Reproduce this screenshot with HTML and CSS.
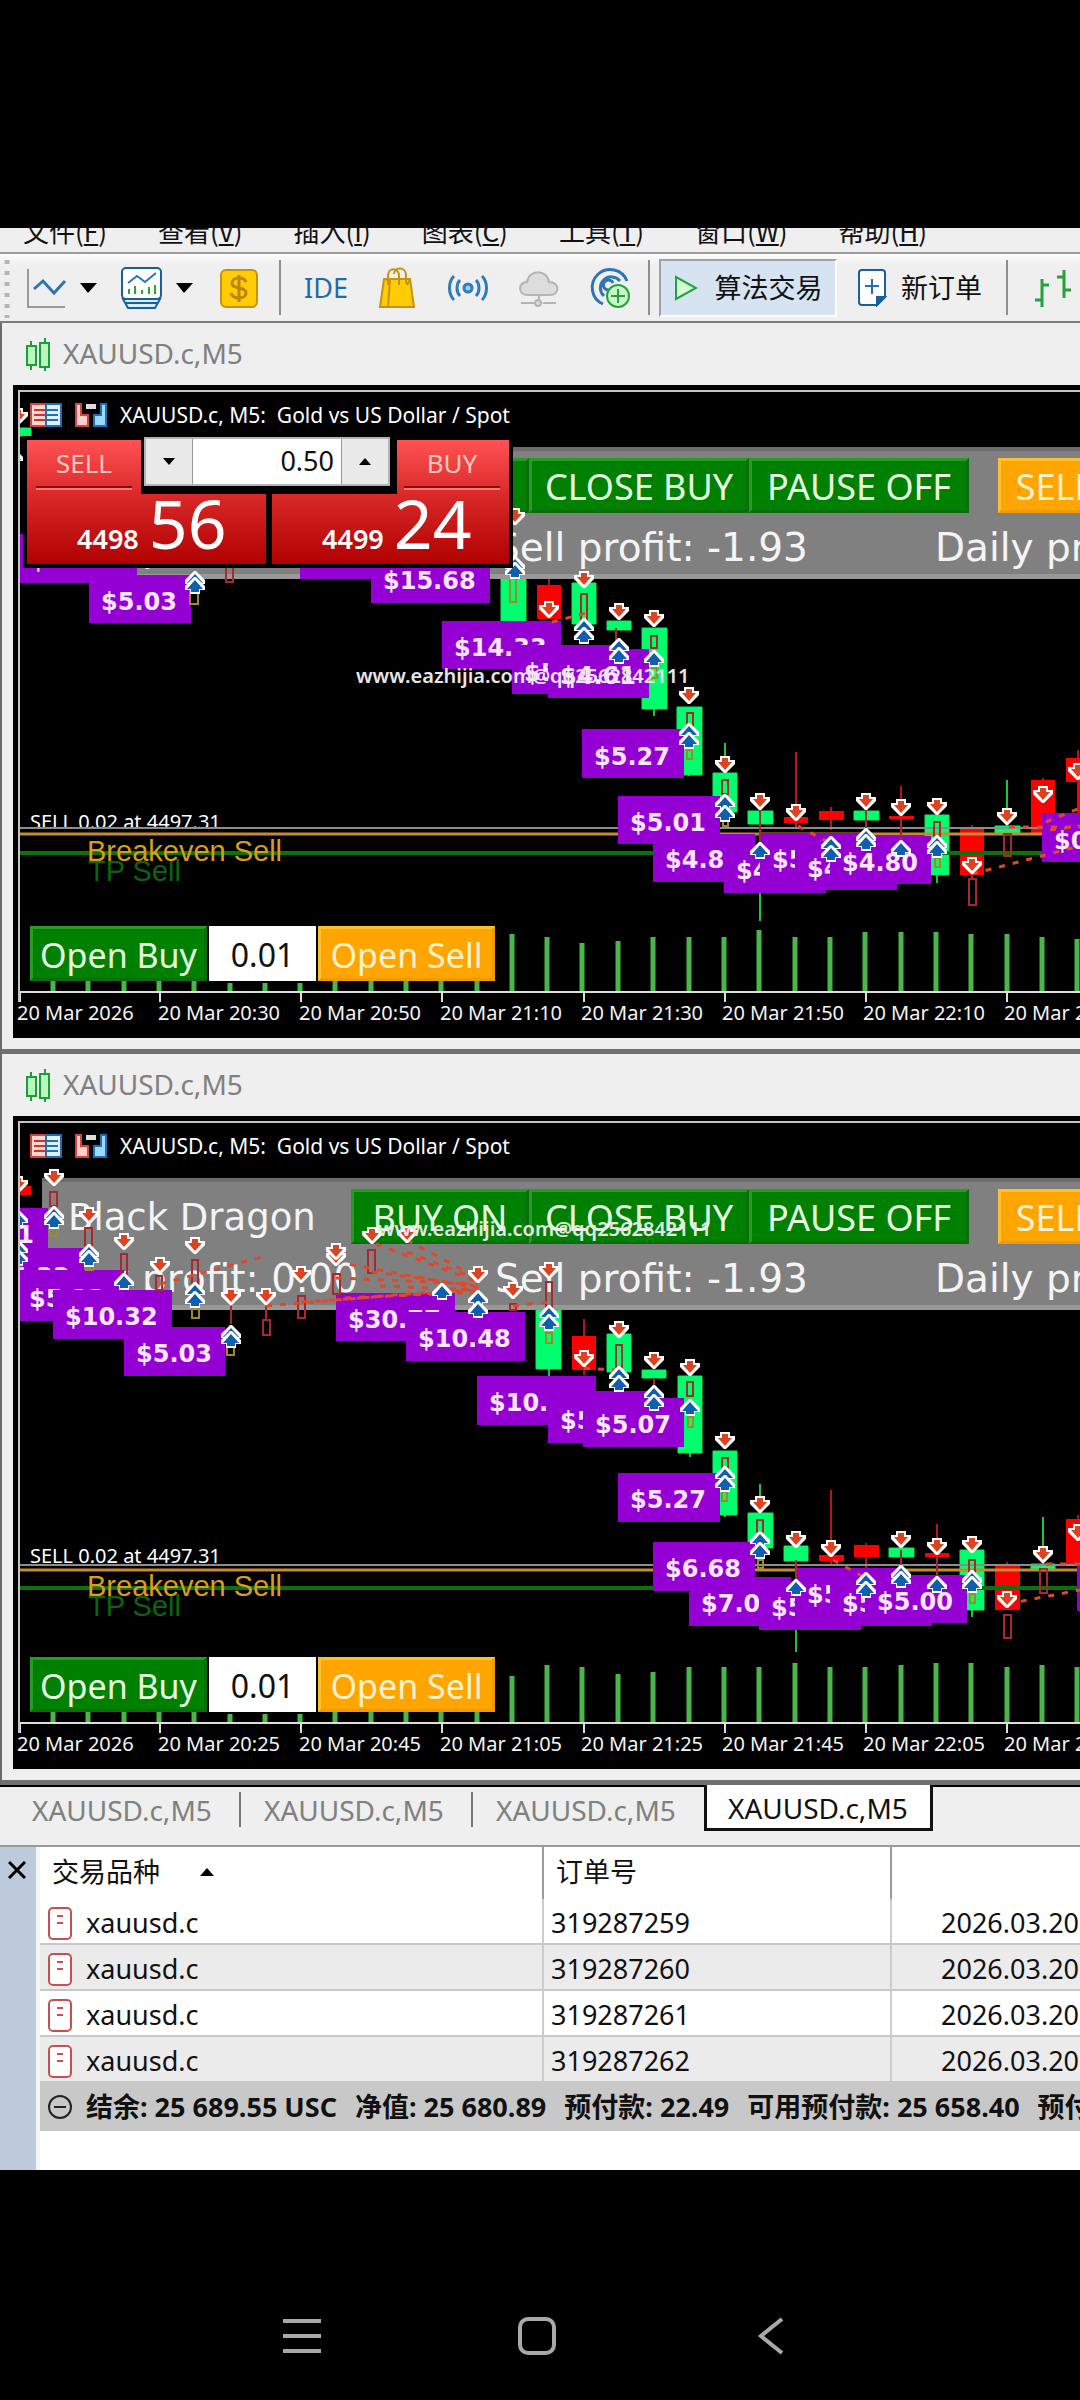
FILE: index.html
```html
<!DOCTYPE html>
<html lang="zh-CN">
<head>
<meta charset="utf-8">
<meta name="viewport" content="width=device-width, initial-scale=1">
<title>XAUUSD.c,M5</title>
<link rel="stylesheet" href="styles.css">
</head>
<body>
<svg class="defs" aria-hidden="true">
  <defs>
    <g id="dn"><path d="M-5 0H5V4H10V8L1 17H-1L-10 8V4H-5Z" fill="#fff"/><path d="M-3 2H3V6H7L0 14L-7 6H-3Z" fill="#dc4320"/></g>
    <g id="up"><path d="M-5 17H5V13H10V9L1 0H-1L-10 9V13H-5Z" fill="#fff"/><path d="M-4 15H4V12H8L0 3L-8 12H-4Z" fill="#0f5fae"/></g>
    <g id="up2"><use href="#up"/><use href="#up" y="6"/></g>
    <g id="up3"><use href="#up"/><use href="#up" y="9"/></g>
    <g id="candles"><path d="M6 4v5M6 28v5M20 1v5M20 30v4" stroke="#18a038" stroke-width="2"/><path d="M2 9h9v19H2zM15 6h9v24h-9z" fill="#b9f7bd" stroke="#18a038" stroke-width="2"/></g>
    <g id="depth"><path d="M1 1h15v22H1z" fill="#ffd8d0" stroke="#d8433a" stroke-width="2"/><path d="M16 1h15v22H16z" fill="#dff1ff" stroke="#1f6fb5" stroke-width="2"/><path d="M4 7h11M4 12h11M4 17h11" stroke="#c8362f" stroke-width="2"/><path d="M17 7h11M17 12h11M17 17h11" stroke="#1f6fb5" stroke-width="2"/></g>
    <g id="quick"><path d="M1 1h5v11h7v11H1z" fill="#ffd0cc" stroke="#d8433a" stroke-width="2"/><path d="M31 1h-5v11h-7v11h12z" fill="#9fd8ff" stroke="#1f6fb5" stroke-width="2"/><path d="M11 1h10v5H11z" fill="#ddd"/></g>
    <g id="order"><rect x="1" y="1" width="22" height="31" rx="4" fill="#fff" stroke="#c8504c" stroke-width="2"/><path d="M9 9h6M9 16h6" stroke="#c8504c" stroke-width="2"/></g>
  </defs>
</svg>

<main class="terminal">
  <nav class="menu">
    <a href="#file">文件(<u>F</u>)</a><a href="#view">查看(<u>V</u>)</a><a href="#insert">插入(<u>I</u>)</a><a href="#charts">图表(<u>C</u>)</a><a href="#tools">工具(<u>T</u>)</a><a href="#window">窗口(<u>W</u>)</a><a href="#help">帮助(<u>H</u>)</a>
  </nav>

  <div class="toolbar">
    <svg class="grip" width="6" height="60"><path d="M3 2v58" stroke="#b5b5b5" stroke-width="5" stroke-dasharray="4 7"/></svg>
    <div class="group group-main">
      <button class="tool split" aria-label="Chart type">
        <svg width="42" height="42"><path d="M3 2v38h37" fill="none" stroke="#9a9a9a" stroke-width="2"/><path d="M9 22l9-8 11 12 11-12" fill="none" stroke="#2f74b5" stroke-width="3"/></svg>
        <svg width="17" height="10"><path d="M0 0h17L8 10z"/></svg>
      </button>
      <button class="tool split" aria-label="Indicators">
        <svg width="42" height="44"><rect x="1" y="2" width="39" height="31" rx="4" fill="#fff" stroke="#1b5f9a" stroke-width="2"/><path d="M2 33l5 9h27l5-9z" fill="#d8efff" stroke="#1b5f9a" stroke-width="2"/><path d="M5 37h31" stroke="#1b5f9a" stroke-width="2"/><path d="M7 17l9-7 8 6 11-9" fill="none" stroke="#2f74b5" stroke-width="2"/><path d="M8 28v-5M14 28v-8M21 28v-4M28 28v-7M34 28v-9" stroke="#2ea52e" stroke-width="2"/></svg>
        <svg width="17" height="10"><path d="M0 0h17L8 10z"/></svg>
      </button>
      <button class="tool" aria-label="Symbols">
        <svg width="42" height="42"><rect x="4" y="3" width="36" height="37" rx="5" fill="#ffcc05" stroke="#c8930c" stroke-width="2"/><path d="M29 15c-1-3-4-4-7-4-4 0-7 2-7 5 0 7 14 3 14 10 0 3-3 5-7 5s-7-2-8-5M22 8v27" fill="none" stroke="#bd8508" stroke-width="3"/></svg>
      </button>
    </div>
    <span class="rule"></span>
    <div class="group group-market">
      <button class="tool ide">IDE</button>
      <button class="tool" aria-label="Market"><svg width="42" height="42"><path d="M8 12h26l4 28H4z" fill="#ffcc05" stroke="#c8930c" stroke-width="2"/><path d="M8 12l6 1-2 27M34 12l-3 6" fill="none" stroke="#c8930c" stroke-width="2"/><path d="M12 18V9c0-9 11-9 11 0v9M18 7c1-8 12-7 12 1v9" fill="none" stroke="#c8930c" stroke-width="2"/></svg></button>
      <button class="tool" aria-label="Signals"><svg width="42" height="42" fill="none" stroke="#2f7cba" stroke-width="3"><circle cx="21" cy="21" r="4" fill="#8fd0ff"/><path d="M13 13c-4 4-4 12 0 16M29 13c4 4 4 12 0 16M7 9c-6 6-6 18 0 24M35 9c6 6 6 18 0 24"/></svg></button>
      <button class="tool" aria-label="VPS"><svg width="42" height="42" fill="#ddd" stroke="#b4b4b4" stroke-width="2"><path d="M10 28c-11 0-10-13-1-13 2-13 20-13 22 0 11 0 11 13 1 13z"/><path d="M21 28v6M3 36h13M25 36h13"/><circle cx="20" cy="36" r="3"/></svg></button>
      <button class="tool" aria-label="Radar"><svg width="42" height="44" fill="none" stroke="#2f74b5" stroke-width="3"><path d="M14 38a18 18 0 1 1 24-23M15 30a11 11 0 1 1 16-15M20 24a5 5 0 1 1 4-7"/><circle cx="29" cy="30" r="11" fill="#c9f7c9" stroke="#24a33c" stroke-width="2"/><path d="M29 23v14M22 30h14" stroke="#24a33c" stroke-width="2"/></svg></button>
    </div>
    <span class="rule"></span>
    <button class="tool labelled pressed"><svg width="24" height="26"><path d="M2 2v22l20-11z" fill="#d4ffd4" stroke="#24a33c" stroke-width="2"/></svg>算法交易</button>
    <button class="tool labelled"><svg width="30" height="40"><path d="M5 2h20q3 0 3 3v24l-8 8H5q-3 0-3-3V5q0-3 3-3z" fill="#fff" stroke="#1b5f9a" stroke-width="2"/><path d="M28 29l-8 8v-8z" fill="#1b5f9a" stroke="#1b5f9a" stroke-width="2"/><path d="M15 11v15M8 18h14" stroke="#1b6fb5" stroke-width="2"/></svg>新订单</button>
    <span class="rule rule-wide"></span>
    <button class="tool" aria-label="Bar chart"><svg width="42" height="42" fill="none" stroke="#24a33c" stroke-width="3"><path d="M10 12v28M3 33h7M10 18h7M32 3v28M25 10h7M32 23h7"/></svg></button>
  </div>

  <section class="window">
    <h2 class="window-title"><svg width="26" height="36"><use href="#candles"/></svg>XAUUSD.c,M5</h2>
    <div class="canvas">
      <div class="plot">
        <svg class="layer"><g transform="translate(-20 -392)">
          <path class="vol" d="M53 980v12M88 980v12M124 980v12M159 980v12M194 980v12M230 983v9M265 983v9M300 983v9M335 980v12M371 980v12M406 980v12M441 980v12M477 980v12M512 934v58M547 937v55M582 943v49M618 941v51M653 937v55M689 937v55M724 937v55M759 930v62M795 937v55M830 937v55M865 932v60M901 932v60M936 932v60M971 934v58M1007 934v58M1042 937v55M1077 939v53"/>
          <path class="wick-up" d="M513 579v45M654 628v88M689 707v69M725 743v70M760 811v110M866 811v20M937 815v68M1007 780v54"/>
          <path class="wick-dn" d="M549 578v42M796 752v71M831 807v23M901 786v60M972 825v50M1043 778v55M1078 750v70"/>
          <path class="body-up" d="M20 428h11v8H20zM501 579h25v42h-25zM572 583h24v41h-24zM607 621h24v9h-24zM642 628h25v81h-25zM677 707h25v68h-25zM713 773h24v39h-24zM748 811h25v13h-25zM854 811h25v9h-25zM925 815h24v60h-24zM995 826h25v8h-25z"/>
          <path class="body-dn" d="M537 585h24v34h-24zM784 817h24v6h-24zM819 811h25v9h-25zM889 816h25v3h-25zM960 828h24v47h-24zM1031 780h24v53h-24zM1066 758h24v24h-24zM1077 782h5v31h-5z"/>
          <text class="order-line" x="30" y="829">SELL 0.02 at 4497.31</text>
          <path class="line-order" d="M20 828H4000"/><path class="line-even" d="M20 834H4000"/><path class="line-tp" d="M20 853H4000"/>
          <text class="note tp" x="88" y="881">TP Sell</text><text class="note even" x="87" y="861">Breakeven Sell</text>
          <path class="axis" d="M20 992H4000M20 992v10M160 992v10M301 992v10M442 992v10M584 992v10M725 992v10M866 992v10M1007 992v10"/>
        </g></svg>
        <div class="panel">
          <div class="panel-row"><strong class="robot">Black Dragon</strong><button class="ea">BUY ON</button><button class="ea wide">CLOSE BUY</button><button class="ea wide">PAUSE OFF</button><button class="ea sell">SELL ON</button></div>
          <div class="panel-stats"><span>Buy profit: 0.00</span><span>Sell profit: -1.93</span><span>Daily profit: 0.00</span></div>
        </div>
        <svg class="layer"><g transform="translate(-20 -392)">
          <g class="tag">
            <rect x="18" y="534" width="119" height="49"/><text x="30" y="568">$10.32</text>
            <rect x="89" y="575" width="102" height="48"/><text x="101" y="610">$5.03</text>
            <rect x="300" y="530" width="119" height="49"/>
            <rect x="371" y="554" width="119" height="49"/><text x="383" y="589">$15.68</text>
            <rect x="442" y="621" width="119" height="48"/><text x="454" y="656">$14.33</text>
            <rect x="512" y="645" width="102" height="49"/><text x="524" y="681">$5.12</text>
            <rect x="548" y="649" width="101" height="49"/><text x="560" y="684">$4.61</text>
            <rect x="582" y="729" width="102" height="49"/><text x="594" y="765">$5.27</text>
            <rect x="618" y="796" width="102" height="48"/><text x="630" y="831">$5.01</text>
            <rect x="653" y="834" width="102" height="48"/><text x="665" y="868">$4.85</text>
            <rect x="724" y="845" width="102" height="48"/><text x="736" y="879">$4.90</text>
            <rect x="760" y="833" width="102" height="48"/><text x="772" y="868">$5.10</text>
            <rect x="795" y="842" width="102" height="48"/><text x="807" y="877">$4.70</text>
            <rect x="830" y="836" width="101" height="48"/><text x="842" y="871">$4.80</text>
            <rect x="1042" y="813" width="102" height="49"/><text x="1054" y="849">$0.40</text>
          </g>
          <path class="trade" d="M226 560h7v22h-7zM581 594h6v26h-6zM616 628v14M651 636h6v12h-6zM687 713h6v14h-6zM722 780h6v14h-6zM760 808v34M796 823v4M866 810v20M901 815v27M934 822h6v14h-6zM972 874v4M969 879h7v26h-7zM1004 834h7v22h-7z"/>
          <path class="yield" d="M190 592h8v12h-8zM510 578h6v24h-6zM652 668h5v10h-5zM687 750h5v9h-5zM723 820h5v6h-5zM935 858h5v9h-5z"/>
          <path class="deal" d="M552 622L590 612M798 826L828 842M972 874L1080 846M1009 827H1080M1046 822l34-14M1050 830l30-4"/>
          <use href="#dn" x="18" y="408"/><use href="#up" x="13" y="448"/><use href="#dn" x="515" y="508"/><use href="#up2" x="515" y="556"/><use href="#up2" x="195" y="571"/>
          <use href="#dn" x="549" y="601"/><use href="#dn" x="584" y="571"/><use href="#dn" x="619" y="603"/><use href="#dn" x="654" y="610"/><use href="#dn" x="689" y="687"/><use href="#dn" x="725" y="756"/><use href="#dn" x="760" y="793"/><use href="#dn" x="796" y="804"/><use href="#dn" x="866" y="793"/><use href="#dn" x="901" y="799"/><use href="#dn" x="937" y="798"/><use href="#dn" x="972" y="857"/><use href="#dn" x="1007" y="808"/><use href="#dn" x="1043" y="786"/><use href="#dn" x="1078" y="763"/>
          <use href="#up3" x="584" y="618"/><use href="#up3" x="619" y="638"/><use href="#up" x="654" y="650"/><use href="#up3" x="689" y="723"/><use href="#up" x="725" y="794"/><use href="#up" x="725" y="805"/><use href="#up" x="760" y="842"/><use href="#up3" x="831" y="836"/><use href="#up2" x="866" y="828"/><use href="#up" x="901" y="840"/><use href="#up2" x="937" y="835"/>
        </g></svg>
        <div class="caption"><svg width="32" height="24"><use href="#depth"/></svg><svg width="32" height="24"><use href="#quick"/></svg><span>XAUUSD.c, M5:&nbsp; Gold vs US Dollar / Spot</span></div>
        <form class="oneclick">
          <button type="button" class="quote"><span class="side">SELL</span><span class="price"><small>4498</small><b>56</b></span></button>
          <button type="button" class="quote quote-buy"><span class="side">BUY</span><span class="price"><small>4499</small><b>24</b></span></button>
          <div class="volume">
            <button type="button" aria-label="Decrease"><svg width="12" height="7"><path d="M0 0h12L6 7z"/></svg></button>
            <input type="text" value="0.50" aria-label="Volume">
            <button type="button" aria-label="Increase"><svg width="12" height="7"><path d="M0 7h12L6 0z"/></svg></button>
          </div>
        </form>
        <form class="open"><button type="button" class="ea">Open Buy</button><input type="text" value="0.01" aria-label="Lots"><button type="button" class="ea sell">Open Sell</button></form>
        <p class="watermark">www.eazhijia.com@qq2562842111</p>
      </div>
      <ol class="times"><li>20 Mar 2026</li><li>20 Mar 20:30</li><li>20 Mar 20:50</li><li>20 Mar 21:10</li><li>20 Mar 21:30</li><li>20 Mar 21:50</li><li>20 Mar 22:10</li><li>20 Mar 22:30</li></ol>
    </div>
  </section>

  <section class="window">
    <h2 class="window-title"><svg width="26" height="36"><use href="#candles"/></svg>XAUUSD.c,M5</h2>
    <div class="canvas">
      <div class="plot">
        <svg class="layer"><g transform="translate(-20 -1123)">
          <path class="vol" d="M53 1711v12M88 1711v12M124 1711v12M159 1711v12M194 1711v12M230 1714v9M265 1714v9M300 1714v9M335 1711v12M371 1711v12M406 1711v12M441 1711v12M477 1711v12M512 1676v47M547 1665v58M582 1667v56M618 1674v49M653 1672v51M689 1667v56M724 1667v56M759 1667v56M795 1663v60M830 1667v56M865 1667v56M901 1665v58M936 1663v60M971 1663v60M1007 1667v56M1042 1665v58M1077 1667v56"/>
          <path class="wick-up" d="M549 1310v66M690 1376v81M725 1451v66M760 1484v64M796 1546v106M901 1548v20M972 1550v67M1043 1517v52"/>
          <path class="wick-dn" d="M584 1319v56M831 1490v75M866 1543v25M937 1524v56M1007 1562v48M1078 1515v50"/>
          <path class="body-up" d="M536 1310h25v59h-25zM607 1334h24v38h-24zM642 1370h24v8h-24zM678 1376h24v77h-24zM713 1451h24v64h-24zM748 1513h25v35h-25zM784 1546h24v15h-24zM889 1548h25v9h-25zM960 1550h24v60h-24zM1031 1564h24v5h-24z"/>
          <path class="body-dn" d="M20 1186h11v9H20zM572 1336h24v34h-24zM819 1555h25v6h-25zM854 1545h25v12h-25zM925 1553h24v4h-24zM995 1564h25v46h-25zM1066 1519h24v46h-24z"/>
          <text class="order-line" x="30" y="1563">SELL 0.02 at 4497.31</text>
          <path class="line-order" d="M20 1565H4000"/><path class="line-even" d="M20 1570H4000"/><path class="line-tp" d="M20 1588H4000"/>
          <text class="note tp" x="88" y="1616">TP Sell</text><text class="note even" x="87" y="1596">Breakeven Sell</text>
          <path class="axis" d="M20 1723H4000M20 1723v10M160 1723v10M301 1723v10M442 1723v10M584 1723v10M725 1723v10M866 1723v10M1007 1723v10"/>
        </g></svg>
        <div class="panel">
          <div class="panel-row"><strong class="robot">Black Dragon</strong><button class="ea">BUY ON</button><button class="ea wide">CLOSE BUY</button><button class="ea wide">PAUSE OFF</button><button class="ea sell">SELL ON</button></div>
          <div class="panel-stats"><span>Buy profit: 0.00</span><span>Sell profit: -1.93</span><span>Daily profit: 0.00</span></div>
        </div>
        <svg class="layer"><g transform="translate(-20 -1123)">
          <g class="tag">
            <rect x="-54" y="1208" width="102" height="48"/><text x="-42" y="1243">$4.71</text>
            <rect x="-35" y="1248" width="119" height="49"/><text x="-23" y="1285">$14.33</text>
            <rect x="17" y="1270" width="107" height="51"/><text x="29" y="1307">$5.12</text>
            <rect x="53" y="1290" width="119" height="49"/><text x="65" y="1325">$10.32</text>
            <rect x="124" y="1327" width="101" height="49"/><text x="136" y="1362">$5.03</text>
            <rect x="336" y="1293" width="119" height="48"/><text x="348" y="1328">$30.77</text>
            <rect x="406" y="1312" width="119" height="49"/><text x="418" y="1347">$10.48</text>
            <rect x="477" y="1376" width="119" height="49"/><text x="489" y="1411">$10.25</text>
            <rect x="548" y="1391" width="102" height="52"/><text x="560" y="1429">$5.12</text>
            <rect x="583" y="1398" width="101" height="49"/><text x="595" y="1433">$5.07</text>
            <rect x="618" y="1473" width="102" height="49"/><text x="630" y="1508">$5.27</text>
            <rect x="653" y="1542" width="102" height="49"/><text x="665" y="1577">$6.68</text>
            <rect x="689" y="1577" width="102" height="49"/><text x="701" y="1612">$7.05</text>
            <rect x="759" y="1582" width="102" height="48"/><text x="771" y="1616">$5.20</text>
            <rect x="795" y="1568" width="102" height="48"/><text x="807" y="1603">$5.10</text>
            <rect x="830" y="1578" width="102" height="48"/><text x="842" y="1612">$5.30</text>
            <rect x="865" y="1575" width="102" height="48"/><text x="877" y="1610">$5.00</text>
            <rect x="1077" y="1562" width="102" height="49"/>
          </g>
          <path class="trade" d="M50 1192h7v14h-7zM85 1228h7v18h-7zM121 1254h6v20h-6zM156 1276h6v14h-6zM192 1260h6v24h-6zM231 1306v18M263 1320h7v15h-7zM266 1306v14M298 1296h7v22h-7zM333 1274h7v20h-7zM368 1250h7v23h-7zM510 1304h6v6h-6zM546 1282h6v26h-6zM616 1345h6v22h-6zM654 1378v10M687 1382h6v14h-6zM722 1458h6v10h-6zM757 1520h6v12h-6zM796 1560v22M901 1550v16M937 1556v20M969 1560h6v12h-6zM1004 1615h7v23h-7zM1040 1569h7v24h-7z"/>
          <path class="yield" d="M50 1228h7v8h-7zM86 1264h7v6h-7zM192 1308h7v10h-7zM227 1346h7v9h-7zM546 1333h6v10h-6zM688 1417h5v10h-5zM722 1492h5v9h-5zM758 1560h5v8h-5zM970 1594h5v9h-5z"/>
          <path class="deal" d="M160 1284L266 1256M266 1306L478 1288M301 1302L478 1290M336 1262L478 1288M336 1278L478 1284M345 1298L478 1292M372 1272L478 1286M380 1286L478 1290M376 1244L478 1282M407 1240L478 1278M407 1252L470 1276M513 1306L549 1302M584 1368L615 1370M833 1560L862 1576M1007 1604L1080 1590M1046 1564H1080"/>
          <use href="#dn" x="18" y="1176"/><use href="#up" x="18" y="1210"/><use href="#up3" x="18" y="1240"/>
          <use href="#dn" x="54" y="1169"/><use href="#dn" x="89" y="1207"/><use href="#dn" x="124" y="1233"/><use href="#dn" x="160" y="1257"/><use href="#dn" x="195" y="1237"/><use href="#dn" x="231" y="1288"/><use href="#dn" x="266" y="1288"/><use href="#dn" x="301" y="1266"/><use href="#dn" x="336" y="1249"/><use href="#dn" x="336" y="1243"/><use href="#dn" x="372" y="1227"/><use href="#dn" x="407" y="1226"/><use href="#dn" x="478" y="1266"/><use href="#dn" x="513" y="1282"/><use href="#dn" x="549" y="1262"/><use href="#dn" x="584" y="1350"/><use href="#dn" x="619" y="1321"/><use href="#dn" x="654" y="1352"/><use href="#dn" x="690" y="1359"/><use href="#dn" x="725" y="1432"/><use href="#dn" x="760" y="1496"/><use href="#dn" x="796" y="1531"/><use href="#dn" x="831" y="1540"/><use href="#dn" x="901" y="1531"/><use href="#dn" x="937" y="1538"/><use href="#dn" x="972" y="1536"/><use href="#dn" x="1007" y="1591"/><use href="#dn" x="1043" y="1546"/><use href="#dn" x="1078" y="1524"/>
          <use href="#up2" x="54" y="1206"/><use href="#up2" x="89" y="1244"/><use href="#up" x="124" y="1273"/><use href="#up3" x="195" y="1282"/><use href="#up2" x="231" y="1325"/><use href="#up" x="442" y="1283"/><use href="#up" x="478" y="1290"/><use href="#up" x="478" y="1301"/><use href="#up3" x="549" y="1305"/><use href="#up3" x="619" y="1366"/><use href="#up3" x="654" y="1385"/><use href="#up" x="690" y="1399"/><use href="#up3" x="725" y="1466"/><use href="#up" x="760" y="1531"/><use href="#up" x="760" y="1542"/><use href="#up" x="796" y="1579"/><use href="#up3" x="866" y="1572"/><use href="#up2" x="901" y="1565"/><use href="#up" x="937" y="1576"/><use href="#up2" x="972" y="1570"/>
        </g></svg>
        <div class="caption"><svg width="32" height="24"><use href="#depth"/></svg><svg width="32" height="24"><use href="#quick"/></svg><span>XAUUSD.c, M5:&nbsp; Gold vs US Dollar / Spot</span></div>
        <form class="open"><button type="button" class="ea">Open Buy</button><input type="text" value="0.01" aria-label="Lots"><button type="button" class="ea sell">Open Sell</button></form>
        <p class="watermark watermark-low">www.eazhijia.com@qq2562842111</p>
      </div>
      <ol class="times"><li>20 Mar 2026</li><li>20 Mar 20:25</li><li>20 Mar 20:45</li><li>20 Mar 21:05</li><li>20 Mar 21:25</li><li>20 Mar 21:45</li><li>20 Mar 22:05</li><li>20 Mar 22:25</li></ol>
    </div>
  </section>

  <nav class="tabs">
    <a href="#chart-1">XAUUSD.c,M5</a><a href="#chart-2">XAUUSD.c,M5</a><a href="#chart-3">XAUUSD.c,M5</a><a href="#chart-4" class="active">XAUUSD.c,M5</a>
  </nav>

  <section class="toolbox">
    <div class="strip"><button class="tool" aria-label="Close"><svg width="18" height="18"><path d="M1 1l16 16M17 1L1 17" stroke="#000" stroke-width="3"/></svg></button></div>
    <table class="orders">
      <colgroup><col class="col-symbol"><col class="col-ticket"><col></colgroup>
      <thead><tr><th><div class="heading">交易品种<svg width="14" height="8"><path d="M0 8h14L7 0z"/></svg></div></th><th>订单号</th><th></th></tr></thead>
      <tbody>
        <tr><td><div class="symbol"><svg width="24" height="33"><use href="#order"/></svg>xauusd.c</div></td><td>319287259</td><td>2026.03.20</td></tr>
        <tr><td><div class="symbol"><svg width="24" height="33"><use href="#order"/></svg>xauusd.c</div></td><td>319287260</td><td>2026.03.20</td></tr>
        <tr><td><div class="symbol"><svg width="24" height="33"><use href="#order"/></svg>xauusd.c</div></td><td>319287261</td><td>2026.03.20</td></tr>
        <tr><td><div class="symbol"><svg width="24" height="33"><use href="#order"/></svg>xauusd.c</div></td><td>319287262</td><td>2026.03.20</td></tr>
      </tbody>
      <tfoot><tr><td colspan="3"><div class="balance"><svg width="24" height="24"><circle cx="12" cy="12" r="11" fill="none" stroke="#222" stroke-width="2"/><path d="M6 12h12" stroke="#222" stroke-width="2"/></svg><span>结余: 25 689.55 USC</span><span>净值: 25 680.89</span><span>预付款: 22.49</span><span>可用预付款: 25 658.40</span><span>预付款比例:</span></div></td></tr></tfoot>
    </table>
  </section>
</main>

<nav class="phone-nav">
  <button aria-label="Recents"><svg width="40" height="40"><path d="M1 5h38M1 20h38M1 35h38" stroke="#a8a8a8" stroke-width="4"/></svg></button>
  <button aria-label="Home"><svg width="40" height="40"><rect x="3" y="3" width="34" height="34" rx="8" fill="none" stroke="#a8a8a8" stroke-width="4"/></svg></button>
  <button aria-label="Back"><svg width="40" height="40"><path d="M30 3L9 20l21 17" fill="none" stroke="#a8a8a8" stroke-width="4"/></svg></button>
</nav>
</body>
</html>
```

FILE: styles.css
```css
* { box-sizing: border-box; }

body {
  margin: 0;
  padding-top: 228px;
  min-height: 100vh;
  display: flex;
  flex-direction: column;
  background: #000;
  color: #111;
  font: 27px/36px "Noto Sans", "Noto Sans CJK SC", sans-serif;
  overflow-x: hidden;
}

button, input {
  font: inherit;
  color: inherit;
  margin: 0;
  padding: 0;
  border: 0;
  border-radius: 0;
  background: none;
}

svg { flex: none; display: block; }
.defs { position: absolute; width: 0; height: 0; }
.terminal { background: #efefef; overflow: hidden; }

/* menu bar, scrolled partly out of view */
.menu {
  display: flex;
  align-items: flex-end;
  gap: 51px;
  height: 26px;
  padding: 0 0 5px 23px;
  overflow: hidden;
  border-bottom: 2px solid #9c9c9c;
  font-size: 26px;
  line-height: 32px;
  font-family: "Noto Sans CJK SC", "Noto Sans", sans-serif;
  white-space: nowrap;
}
.menu a { flex: none; color: #111; text-decoration: none; }
.menu u { text-underline-offset: 2px; }

/* toolbar */
.toolbar {
  display: flex;
  align-items: center;
  height: 69px;
  padding-left: 4px;
  background: linear-gradient(#fbfbfb, #efefef 12px);
  border-bottom: 2px solid #7c7c7c;
  overflow: hidden;
  white-space: nowrap;
}
.grip { margin-right: 15px; }
.group { display: flex; align-items: center; flex: none; }
.group-main { gap: 24px; }
.group-market { gap: 29px; }
.tool { display: flex; align-items: center; justify-content: center; flex: none; }
.split { gap: 13px; }
.rule { flex: none; width: 2px; height: 55px; margin: 0 24px 0 20px; background: #8e8e8e; }
.group-market + .rule { margin: 0 9px 0 17px; }
.rule-wide { margin: 0 24px; }
.ide { width: 42px; color: #1f6aa8; font-family: "Noto Sans"; }
.labelled { gap: 14px; margin-left: 20px; font-size: 27px; }
.pressed {
  gap: 17px;
  width: 178px;
  height: 58px;
  margin: 0;
  background: #d6e4f1;
  border: 2px solid #fff;
  border-top-color: #9aa3ac;
  border-left-color: #9aa3ac;
}

/* chart windows */
.window {
  padding: 0 0 11px 11px;
  border-left: 2px solid #6b6b6b;
  border-bottom: 5px solid #707070;
}
.window-title {
  display: flex;
  align-items: center;
  gap: 12px;
  height: 62px;
  margin: 0;
  padding: 0 0 2px 12px;
  color: #808080;
  font-size: 28px;
  font-weight: 400;
}
.window-title svg { margin-top: 3px; }
.canvas { height: 653px; padding: 5px 0 0 5px; background: #000; overflow: hidden; }
.plot {
  position: relative;
  height: 612px;
  overflow: hidden;
  border: solid #c4c4c4;
  border-width: 2px 0 0 2px;
}
.layer { position: absolute; inset: 0; width: 100%; height: 100%; pointer-events: none; }

.vol { stroke: #4ab54a; stroke-width: 5; }
.wick-up { stroke: #19c83a; stroke-width: 2; }
.wick-dn { stroke: #b8141c; stroke-width: 2; }
.body-up { fill: #00ff6e; stroke: #18e858; stroke-width: 1; }
.body-dn { fill: #ff0000; }
.line-order { stroke: #8a8d92; stroke-width: 2; }
.line-even { stroke: #c88a30; stroke-width: 3; }
.line-tp { stroke: #0d700d; stroke-width: 4; }
.axis { fill: none; stroke: #e0dce0; stroke-width: 2; }
.order-line { fill: #fff; font: 20px "Noto Sans", sans-serif; }
.note { font: 29px "Liberation Sans", Arial, sans-serif; }
.even { fill: #d99e18; }
.tp { fill: #0d640d; }
.tag rect { fill: #9400d3; }
.tag text { fill: #ffe6ff; font: bold 24px "DejaVu Sans", Verdana, sans-serif; }
.trade { fill: none; stroke: #a8282c; stroke-width: 2; }
.yield { fill: none; stroke: #a08a28; stroke-width: 2; }
.deal { fill: none; stroke: #e0482c; stroke-width: 3; stroke-dasharray: 6 8; }

.caption {
  position: absolute;
  top: 8px;
  left: 10px;
  display: flex;
  align-items: center;
  gap: 13px;
  color: #fff;
  font-size: 21px;
  line-height: 30px;
  white-space: nowrap;
}

/* expert advisor panel */
.panel {
  position: absolute;
  top: 55px;
  left: 22px;
  right: 0;
  height: 132px;
  padding-top: 7px;
  overflow: hidden;
  background: #808080;
  border-top: 4px solid #6c6c6c;
  border-bottom: 5px solid #989898;
  color: #f4f4f4;
  font-family: "DejaVu Sans", Verdana, sans-serif;
  white-space: nowrap;
}
.panel-row { display: flex; align-items: center; padding-left: 26px; }
.robot { flex: none; width: 283px; padding-top: 3px; font-size: 37px; font-weight: 400; }
.ea {
  flex: none;
  width: 178px;
  height: 55px;
  padding-top: 2px;
  color: #e9ffe4;
  background: #008000;
  border: 3px solid #0a6e0a;
  border-top-color: #279a27;
  border-left-color: #279a27;
  font: 36px/40px "Noto Sans", Tahoma, sans-serif;
}
.wide { width: 220px; }
.sell {
  color: #fff2d0;
  background: #ffa500;
  border-color: #f09a00;
  border-top-color: #ffc030;
  border-left-color: #ffc030;
}
.panel .sell { margin-left: 29px; }
.panel-stats { display: flex; padding-left: 13px; font-size: 39px; line-height: 70px; }
.panel-stats span { flex: none; width: 440px; }

/* one-click trading */
.oneclick {
  position: absolute;
  top: 44px;
  left: 3px;
  display: grid;
  grid-template-columns: 239px 237px;
  gap: 6px;
  width: 490px;
  padding: 4px;
  background: #000;
  color: #fff;
}
.quote {
  display: flex;
  flex-direction: column;
  align-items: flex-start;
  height: 124px;
  background: linear-gradient(#ff5252, #d92828 45%, #b00000);
  clip-path: polygon(0 0, 114px 0, 114px 54px, 100% 54px, 100% 100%, 0 100%);
}
.quote-buy { clip-path: polygon(100% 0, 125px 0, 125px 54px, 0 54px, 0 100%, 100% 100%); }
.side {
  width: 96px;
  height: 51px;
  margin-left: 9px;
  border-bottom: 2px solid #8a0c0c;
  box-shadow: 0 2px #ff7a70;
  color: #ffc6c0;
  font-size: 26px;
  line-height: 46px;
}
.quote-buy .side { margin-left: 132px; }
.price { display: flex; align-items: baseline; gap: 10px; padding-left: 50px; line-height: 70px; }
.price small { font-size: 27px; font-weight: 600; }
.price b { font-size: 68px; font-weight: 400; }
.volume {
  position: absolute;
  top: 1px;
  left: 121px;
  display: flex;
  width: 246px;
  height: 49px;
  border: 2px solid #b4b4b4;
  background: #e9e9e9;
  color: #111;
}
.volume button { display: flex; align-items: center; justify-content: center; width: 46px; }
.volume input {
  flex: 1;
  min-width: 0;
  padding: 0 7px 2px 0;
  background: #fff;
  border: solid #999;
  border-width: 0 1px;
  text-align: right;
}

.open { position: absolute; left: 10px; top: 534px; display: flex; gap: 2px; }
.open .ea { width: 177px; font-size: 34px; }
.open input {
  width: 107px;
  height: 55px;
  padding-top: 2px;
  background: #fff;
  font-size: 32px;
  text-align: center;
}

.watermark {
  position: absolute;
  top: 270px;
  left: 336px;
  margin: 0;
  color: #e6e6e6;
  font-size: 20px;
  font-weight: 600;
  line-height: 28px;
}
.watermark-low { top: 92px; left: 358px; }

.times {
  display: flex;
  margin: 0 0 0 -1px;
  padding: 0;
  list-style: none;
  color: #f4f4f4;
  font-size: 20px;
  line-height: 22px;
  white-space: nowrap;
}
.times li { flex: none; width: 141px; }

/* chart tabs */
.tabs {
  display: flex;
  height: 62px;
  border-top: 2px solid #000;
  border-bottom: 2px solid #9a9a9a;
  font-size: 28px;
  white-space: nowrap;
}
.tabs a {
  position: relative;
  flex: none;
  width: 232px;
  padding-left: 32px;
  color: #808080;
  line-height: 46px;
  text-decoration: none;
}
.tabs a + a:not(.active)::before {
  content: "";
  position: absolute;
  left: 7px;
  top: 5px;
  width: 2px;
  height: 35px;
  background: #777;
}
.tabs .active {
  width: 229px;
  height: 46px;
  margin: -2px 0 0 8px;
  padding-left: 21px;
  background: #fff;
  border: 3px solid #111;
  border-top: 0;
  color: #111;
  line-height: 46px;
}

/* toolbox with open positions */
.toolbox { display: flex; min-height: 323px; background: #fff; align-items: stretch; }
.strip { flex: none; width: 40px; background: #bccadb; border-right: 4px solid #f4f4f4; padding: 14px 0 0 8px; }
.orders {
  flex: 1;
  min-width: 0;
  align-self: flex-start;
  border-collapse: separate;
  border-spacing: 0;
  table-layout: fixed;
  width: 100%;
}
.col-symbol { width: 504px; }
.col-ticket { width: 348px; }
.orders th { height: 52px; padding: 0 0 2px 12px; text-align: left; font-weight: 400; border-right: 2px solid #9c9c9c; }
.orders tbody td { height: 46px; padding: 4px 0 0 7px; border-right: 2px solid #ccc; border-bottom: 2px solid #c8c8c8; line-height: 32px; white-space: nowrap; overflow: hidden; }
.orders tbody td:first-child { padding-left: 8px; }
.orders tr > :nth-child(3) { padding-left: 49px; border-right: 0; }
.orders tbody tr:nth-child(even) { background: #ebebeb; }
.heading { display: flex; align-items: center; gap: 40px; }
.symbol { display: flex; align-items: center; gap: 14px; }
.orders tfoot td { height: 48px; padding: 0; background: #c8c8c8; font-weight: 700; }
.balance { display: flex; align-items: center; gap: 18px; padding-left: 8px; overflow: hidden; white-space: nowrap; }
.balance span { flex: none; }
.balance svg { margin-right: -4px; }

/* phone navigation bar */
.phone-nav { display: flex; justify-content: center; gap: 195px; padding: 146px 6px 0 0; }
```
